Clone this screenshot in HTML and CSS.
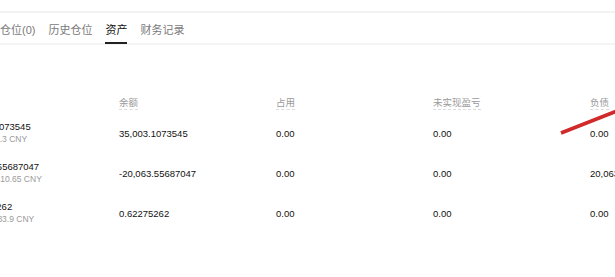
FILE: index.html
```html
<!DOCTYPE html>
<html lang="zh-CN">
<head>
    <meta charset="UTF-8">
    <meta name="viewport" content="width=device-width, initial-scale=1.0">
    <title>资产</title>
    <link rel="stylesheet" href="styles.css">
</head>
<body>
    <div class="topbar"></div>

    <nav class="tabs">
        <a href="#" class="tab">仓位(0)</a>
        <a href="#" class="tab">历史仓位</a>
        <a href="#" class="tab active">资产</a>
        <a href="#" class="tab">财务记录</a>
    </nav>

    <div class="assets">
        <div class="row head">
            <div class="cell"></div>
            <div class="cell"><span class="tip">余额</span></div>
            <div class="cell"><span class="tip">占用</span></div>
            <div class="cell"><span class="tip">未实现盈亏</span></div>
            <div class="cell"><span class="tip">负债</span></div>
        </div>
        <div class="row">
            <div class="cell equity">
                <p>35,003.1073545</p>
                <p class="sub">≈ 252,022.3 CNY</p>
            </div>
            <div class="cell">35,003.1073545</div>
            <div class="cell">0.00</div>
            <div class="cell">0.00</div>
            <div class="cell">0.00</div>
        </div>
        <div class="row">
            <div class="cell equity">
                <p>-20,063.55687047</p>
                <p class="sub">≈ -1,444,410.65 CNY</p>
            </div>
            <div class="cell">-20,063.55687047</div>
            <div class="cell">0.00</div>
            <div class="cell">0.00</div>
            <div class="cell">20,063.55687047</div>
        </div>
        <div class="row">
            <div class="cell equity">
                <p>0.62275262</p>
                <p class="sub">≈ 1,014,483.9 CNY</p>
            </div>
            <div class="cell">0.62275262</div>
            <div class="cell">0.00</div>
            <div class="cell">0.00</div>
            <div class="cell">0.00</div>
        </div>
    </div>

    <!-- annotation stroke drawn over the table -->
    <svg class="mark" width="615" height="277" viewBox="0 0 615 277">
        <line x1="561" y1="133" x2="622" y2="109" stroke="#d02a2a" stroke-width="3.6"/>
    </svg>
</body>
</html>
```

FILE: styles.css
```css
body {
    font-family: "Liberation Sans", "Noto Sans CJK SC", sans-serif;
    margin: 0;
    padding: 0;
    background-color: #fff;
    color: #121212;
    width: 615px;
    height: 277px;
    overflow: hidden;
    position: relative;
}
.topbar {
    height: 11px;
    border-bottom: 2px solid #f3f3f3;
}
.tabs {
    display: flex;
    gap: 13px;
    height: 30px;
    border-bottom: 2px solid #f4f4f4;
}
.tab {
    display: flex;
    align-items: center;
    padding-top: 3px;
    font-size: 11px;
    color: #7a7a7a;
    text-decoration: none;
    border-bottom: 2px solid transparent;
    margin-bottom: -1px;
}
.tab.active {
    color: #121212;
    border-bottom-color: #222;
}
.assets {
    margin-left: -38px;
    margin-top: 47px;
}
.row {
    display: grid;
    grid-template-columns: repeat(5, 157px);
    align-items: center;
    height: 40px;
    font-size: 9.5px;
}
.row.head {
    height: 20px;
    margin-bottom: 1px;
    color: #9a9a9a;
}
.tip {
    border-bottom: 1px dashed #dcdcdc;
    padding-bottom: 1px;
}
.cell {
    white-space: nowrap;
}
.equity p {
    margin: 0;
    line-height: 13px;
}
.equity .sub {
    font-size: 8.5px;
    color: #9a9a9a;
}
.mark {
    position: absolute;
    top: 0;
    left: 0;
}
```
